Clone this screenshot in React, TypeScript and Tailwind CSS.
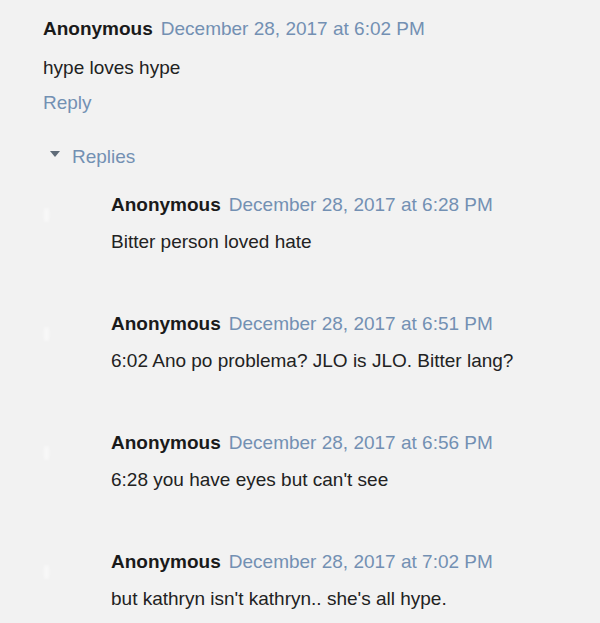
import React from "react";

const font = { fontFamily: '"Liberation Sans", Arial, sans-serif' };

const replies = [
  { date: "December 28, 2017 at 6:28 PM", text: "Bitter person loved hate" },
  { date: "December 28, 2017 at 6:51 PM", text: "6:02 Ano po problema? JLO is JLO. Bitter lang?" },
  { date: "December 28, 2017 at 6:56 PM", text: "6:28 you have eyes but can't see" },
  { date: "December 28, 2017 at 7:02 PM", text: "but kathryn isn't kathryn.. she's all hype." },
];

function Header({ date }: { date: string }) {
  return (
    <div className="flex items-baseline gap-[8px] leading-[22px] text-[19px]">
      <span className="font-bold text-[#1a1a1a]">Anonymous</span>
      <span className="text-[#7390b3]">{date}</span>
    </div>
  );
}

export default function App() {
  return (
    <div style={font} className="w-[600px] h-[623px] bg-[#f2f2f2] overflow-hidden">
      <div className="pt-[18px] pl-[43px]">
        <Header date="December 28, 2017 at 6:02 PM" />
        <div className="mt-[17px] leading-[22px] text-[19px] text-[#222]">hype loves hype</div>
        <div className="mt-[13px] leading-[22px] text-[19px] text-[#7390b3]">Reply</div>
        <div className="mt-[32px] flex items-center leading-[22px] text-[19px] text-[#7390b3]">
          <svg width="10" height="7" viewBox="0 0 10 7" className="ml-[7px] mr-[12px] -mt-[5px]">
            <polygon points="0,0 10,0 5,6" fill="#5f6b78" />
          </svg>
          <span>Replies</span>
        </div>
        <div className="mt-[26px] flex flex-col gap-[60px]">
          {replies.map((r, i) => (
            <div key={i} className="flex">
              <div className="w-[68px] shrink-0">
                <div className="ml-[1px] mt-[14px] w-[5px] h-[14px] bg-white/50 blur-[1.5px] rounded" />
              </div>
              <div>
                <Header date={r.date} />
                <div className="mt-[15px] leading-[22px] text-[19px] text-[#222]">{r.text}</div>
              </div>
            </div>
          ))}
        </div>
      </div>
    </div>
  );
}
